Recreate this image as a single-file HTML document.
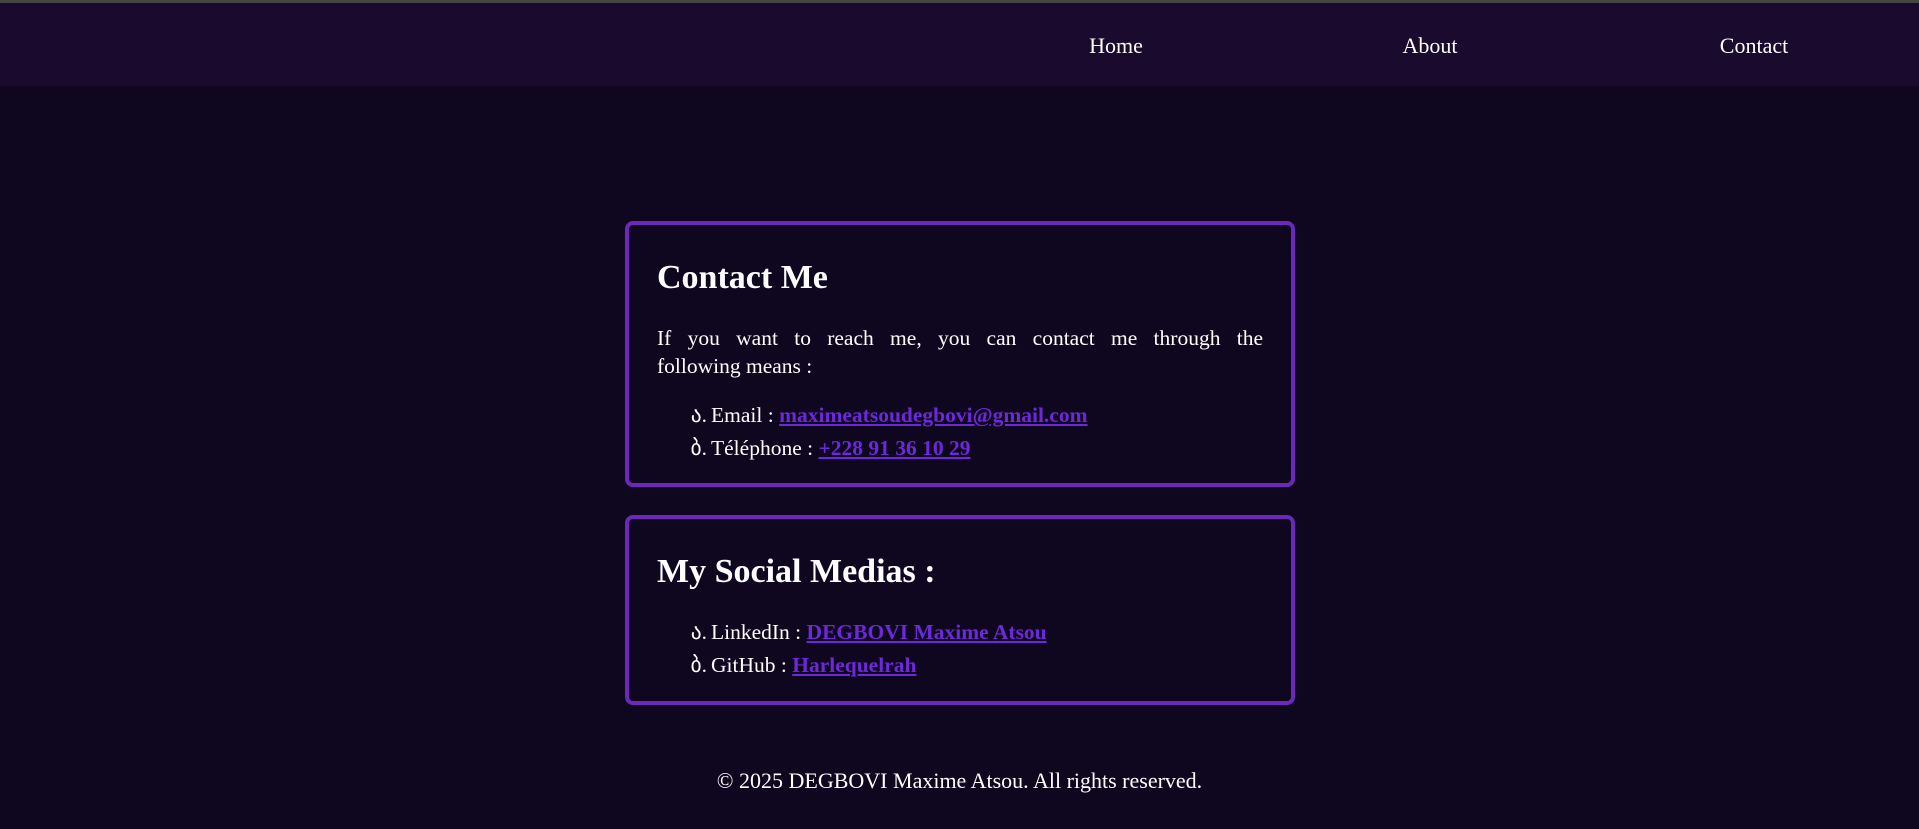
<!DOCTYPE html>
<html><head><meta charset="utf-8"><style>
*{margin:0;padding:0;box-sizing:border-box}
html,body{width:1919px;height:829px;overflow:hidden;background:#0f0720;color:#fff;font-family:"Liberation Serif",serif}
.top{position:absolute;left:0;top:0;width:1919px;height:3px;background:#444}
nav{position:absolute;left:0;top:3px;width:1919px;height:83px;background:#1a0a2e}
nav span{position:absolute;top:30px;font-size:22px;transform:translateX(-50%)}
.card{position:absolute;left:625px;width:670px;border:4px solid #6d28b9;border-radius:8px;background:#0f0720}
h2{position:absolute;left:28px;font-size:34px;font-weight:bold}
p{position:absolute;left:28px;width:606px;font-size:21.5px;line-height:28px}
p span{display:block;text-align:justify;text-align-last:justify}
.li{position:absolute;left:82px;font-size:21.5px;white-space:nowrap}
.li b{font-weight:normal;display:inline-block;width:22px;text-align:right;margin-right:4px;margin-left:-26px}
a{color:#6d28d9;font-weight:bold;text-decoration:underline}
footer{position:absolute;top:768px;left:0;width:1919px;text-align:center;font-size:22px}
</style></head><body>
<div class="top"></div>
<nav><span style="left:1116px">Home</span><span style="left:1430px">About</span><span style="left:1754px">Contact</span></nav>
<div class="card" style="top:221px;height:266px">
<h2 style="top:34px">Contact Me</h2>
<p style="top:99px"><span>If you want to reach me, you can contact me through the</span>following means :</p>
<div class="li" style="top:178px"><b>ა.</b>Email : <a>maximeatsoudegbovi@gmail.com</a></div>
<div class="li" style="top:211px"><b>ბ.</b>Téléphone : <a>+228 91 36 10 29</a></div>
</div>
<div class="card" style="top:515px;height:190px">
<h2 style="top:34px">My Social Medias :</h2>
<div class="li" style="top:101px"><b>ა.</b>LinkedIn : <a>DEGBOVI Maxime Atsou</a></div>
<div class="li" style="top:134px"><b>ბ.</b>GitHub : <a>Harlequelrah</a></div>
</div>
<footer>© 2025 DEGBOVI Maxime Atsou. All rights reserved.</footer>
</body></html>
